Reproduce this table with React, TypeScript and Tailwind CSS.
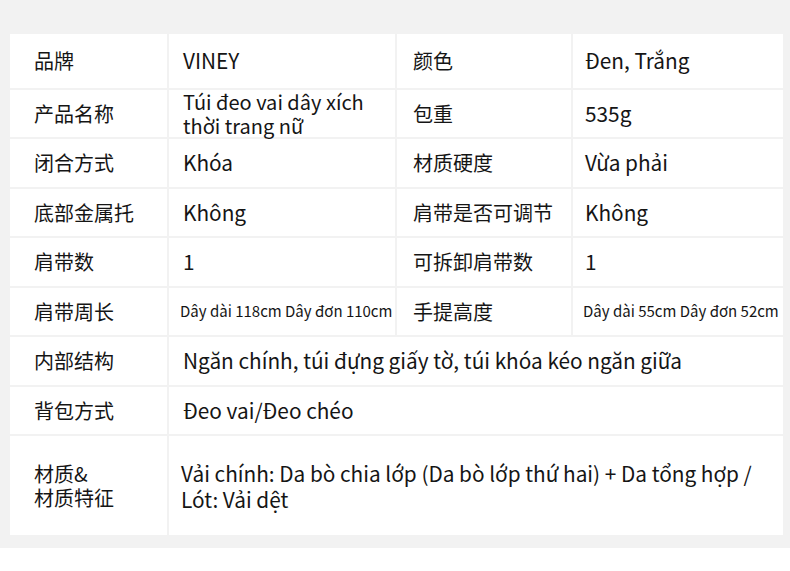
const rows: { label: string; value: string; label2?: string; value2?: string; small?: boolean; tight?: boolean }[] = [
  { label: '品牌', value: 'VINEY', label2: '颜色', value2: 'Đen, Trắng' },
  { label: '产品名称', value: 'Túi đeo vai dây xích thời trang nữ', label2: '包重', value2: '535g', tight: true },
  { label: '闭合方式', value: 'Khóa', label2: '材质硬度', value2: 'Vừa phải' },
  { label: '底部金属托', value: 'Không', label2: '肩带是否可调节', value2: 'Không' },
  { label: '肩带数', value: '1', label2: '可拆卸肩带数', value2: '1' },
  { label: '肩带周长', value: 'Dây dài 118cm Dây đơn 110cm', label2: '手提高度', value2: 'Dây dài 55cm Dây đơn 52cm', small: true },
  { label: '内部结构', value: 'Ngăn chính, túi đựng giấy tờ, túi khóa kéo ngăn giữa' },
  { label: '背包方式', value: 'Đeo vai/Đeo chéo' },
];

export default function App() {
  return (
    <div className="w-[790px] h-[571px] bg-white text-[#151515] font-['Noto_Sans_CJK_SC','Noto_Sans',sans-serif]">
      <div className="bg-[#f2f2f2] pt-[34px] pb-[13px] pl-[10px] pr-[7px]">
        <div className="grid grid-cols-[157px_226px_174px_210px] grid-rows-[54px_47px_48px_47px_48px_47px_48px_47px_99px] gap-[2px]">
          {rows.map((r) => (
            <Row key={r.label} {...r} />
          ))}

          {/* Material */}
          <div className="bg-white flex items-center pl-[24px] text-[20px] leading-[24px]">
            <div>
              <p>材质&amp;</p>
              <p>材质特征</p>
            </div>
          </div>
          <div className="col-span-3 bg-white flex items-center pl-[12px] text-[20.8px] leading-[26px]">
            <div>
              <p>Vải chính: Da bò chia lớp (Da bò lớp thứ hai) + Da tổng hợp /</p>
              <p>Lót: Vải dệt</p>
            </div>
          </div>
        </div>
      </div>
    </div>
  );
}

function Row({ label, value, label2, value2, small, tight }: { label: string; value: string; label2?: string; value2?: string; small?: boolean; tight?: boolean }) {
  const valueClass = small
    ? 'text-[15px] pl-[11px] whitespace-nowrap'
    : tight
      ? 'text-[20px] pl-[14px] pr-2 leading-[24px]'
      : 'text-[20.8px] pl-[14px]';
  return (
    <>
      <div className="bg-white flex items-center pl-[24px] text-[20px]">{label}</div>
      {label2 ? (
        <>
          <div className={`bg-white flex items-center ${valueClass}`}>{value}</div>
          <div className="bg-white flex items-center pl-[16px] text-[20px]">{label2}</div>
          <div className={`bg-white flex items-center ${small ? 'text-[15px] pl-[10px] whitespace-nowrap' : 'text-[20.8px] pl-[12px]'}`}>{value2}</div>
        </>
      ) : (
        <div className="col-span-3 bg-white flex items-center pl-[14px] text-[20.8px]">{value}</div>
      )}
    </>
  );
}
